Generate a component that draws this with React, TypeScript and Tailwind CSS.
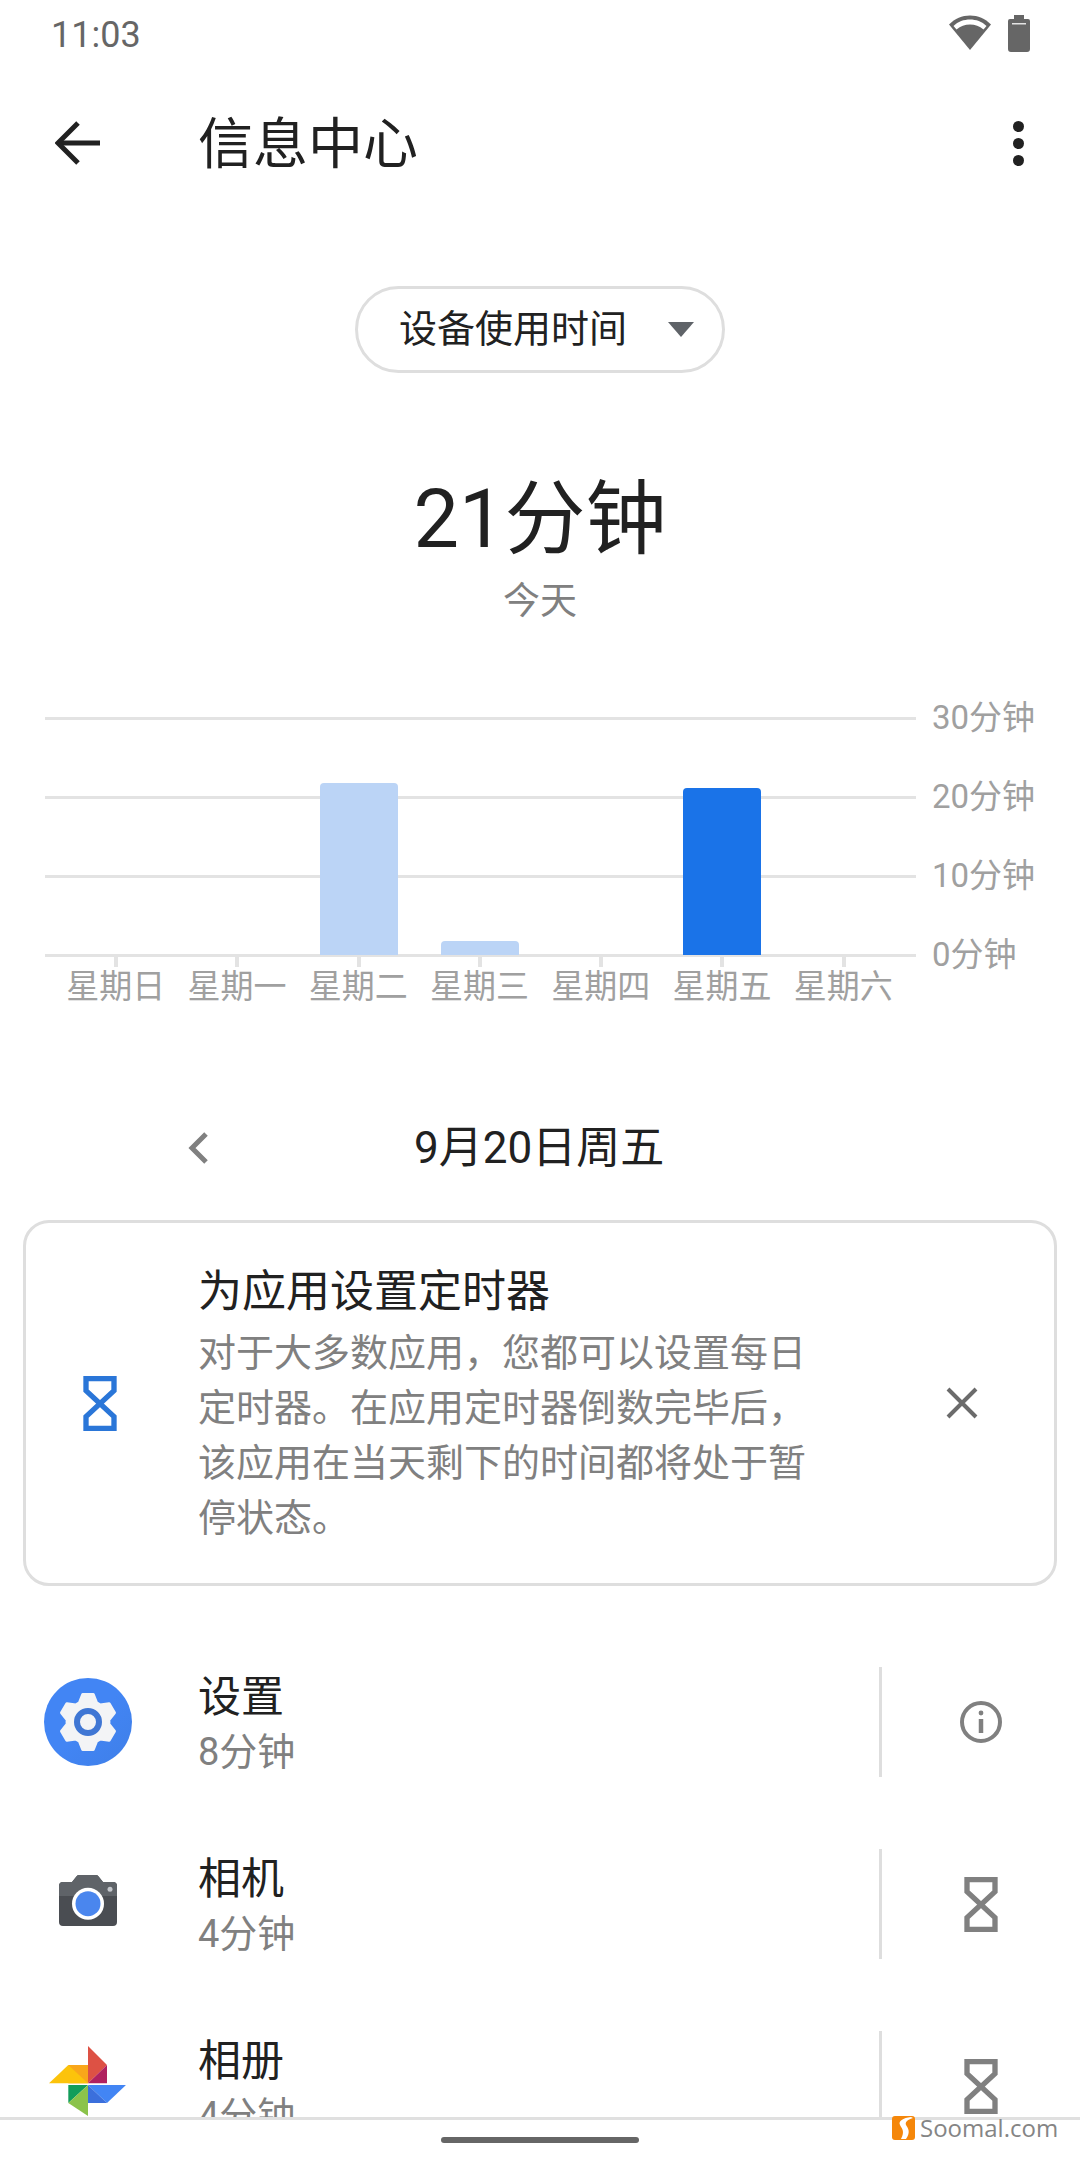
const weekdays = ['星期日', '星期一', '星期二', '星期三', '星期四', '星期五', '星期六'];
const axisLabels = ['30分钟', '20分钟', '10分钟', '0分钟'];
const tickXs = [71, 192, 314, 435, 556, 677, 799];

// six-tooth gear outline, centre 0,0
const gearPoints = Array.from({ length: 6 }, (_, i) => {
  const a = (i * Math.PI) / 3 - Math.PI / 2;
  const pt = (r: number, d: number) =>
    `${(r * Math.cos(a + d)).toFixed(2)},${(r * Math.sin(a + d)).toFixed(2)}`;
  return [pt(21, -0.42), pt(28, -0.19), pt(28, 0.19), pt(21, 0.42)].join(' ');
}).join(' ');

const Hourglass = ({ color }: { color: string }) => (
  <svg width="34" height="55" viewBox="0 0 100 165" fill="none" stroke={color} strokeWidth="16" strokeLinejoin="miter">
    <path d="M8 8H92V44L8 122V157H92V122L8 44Z" />
  </svg>
);

const SettingsIcon = () => (
  <svg width="88" height="88" viewBox="-44 -44 88 88">
    <defs>
      <linearGradient id="gearBg" x1="0" y1="0" x2="1" y2="1">
        <stop offset="0.5" stopColor="#4285f4" />
        <stop offset="1" stopColor="#3f7fe8" />
      </linearGradient>
    </defs>
    <circle r="44" fill="url(#gearBg)" />
    <polygon points={gearPoints} fill="#f3f4f6" stroke="#f3f4f6" strokeWidth="3" strokeLinejoin="round" />
    <circle r="11" fill="#f3f4f6" stroke="#3f76d4" strokeWidth="6" />
  </svg>
);

const CameraIcon = () => (
  <svg width="58" height="51" viewBox="0 0 58 51" className="mb-[7px]">
    <path d="M20 0H37Q39 0 40 2L44 7H54Q58 7 58 11V47Q58 51 54 51H4Q0 51 0 47V11Q0 7 4 7H13L17 2Q18 0 20 0Z" fill="#4a4d52" />
    <path d="M20 0H37Q39 0 40 2L44 7H54Q58 7 58 11V21H0V11Q0 7 4 7H13L17 2Q18 0 20 0Z" fill="#5f6368" />
    <circle cx="29" cy="28.7" r="16" fill="#ffffff" />
    <circle cx="29" cy="28.7" r="12.5" fill="#4a86ee" />
    <circle cx="51" cy="14.3" r="2.5" fill="#c4c7cc" />
  </svg>
);

const PhotosIcon = () => (
  <svg width="78" height="76" viewBox="32 25 226 220" className="mb-[4px]">
    <polygon points="145,25 200,80 145,133" fill="#dd5144" />
    <polygon points="200,80 200,133 145,133" fill="#b0215f" />
    <polygon points="145,138 255,138 200,190" fill="#4285f4" />
    <polygon points="145,138 200,190 145,190" fill="#3b6fdc" />
    <polygon points="145,138 88,138 88,190" fill="#129d5a" />
    <polygon points="145,138 88,190 145,228" fill="#8bc34a" />
    <polygon points="88,80 145,80 145,133 88,133" fill="#f9a61a" />
    <polygon points="32,133 88,80 145,133" fill="#fcc30b" />
  </svg>
);

const AppRow = ({ name, time, icon, action }: { name: string; time: string; icon: React.ReactNode; action: React.ReactNode }) => (
  <div className="flex items-center h-[182px] shrink-0">
    <div className="w-[176px] flex justify-center shrink-0">{icon}</div>
    <div className="flex-1 ml-[22px] pt-[5px]">
      <div className="text-[43px] leading-[55px] text-[#212121]">{name}</div>
      <div className="text-[38px] leading-[55px] text-[#808080]">{time}</div>
    </div>
    <div className="w-[3px] h-[110px] bg-[#dedede]" />
    <div className="w-[198px] flex justify-center shrink-0">{action}</div>
  </div>
);

export default function App() {
  return (
    <div lang="zh-CN" className="relative w-[1080px] h-[2160px] bg-white overflow-hidden font-['Roboto','Noto_Sans_CJK_SC',sans-serif]">
      <div className="h-[2117px] overflow-hidden flex flex-col">
        {/* Status bar */}
        <div className="h-[66px] shrink-0 flex items-center justify-between pl-[51px] pr-[50px]">
          <span className="text-[36px] pt-[3px] text-[#666666]">11:03</span>
          <div className="flex items-center gap-[17px]">
            <svg width="42" height="36" viewBox="0 0 42 36">
              <path d="M0 9.5C6 3.5 13 0.5 21 0.5C29 0.5 36 3.5 42 9.5L21 35Z" fill="#666666" />
              <path d="M4.5 11C9 6.5 15 4.5 21 4.5C27 4.5 33 6.5 37.5 11L34.5 14.5C30.5 11 26 9.5 21 9.5C16 9.5 11.5 11 7.5 14.5Z" fill="#ffffff" />
            </svg>
            <svg width="22" height="37" viewBox="0 0 22 37">
              <path d="M6 0H16V4H20Q22 4 22 6V34Q22 37 19 37H3Q0 37 0 34V6Q0 4 2 4H6Z" fill="#666666" />
              <rect x="4" y="8" width="14" height="1.5" fill="#e4e4e4" />
            </svg>
          </div>
        </div>

        {/* Toolbar */}
        <div className="h-[154px] shrink-0 flex items-center pl-[55px] pr-[56px]">
          <svg width="45" height="44" viewBox="0 0 45 44" fill="none" stroke="#212121" strokeWidth="5">
            <path d="M45 22H4" />
            <path d="M23 2L3 22L23 42" />
          </svg>
          <h1 className="ml-[98px] pt-[2px] flex-1 text-[55px] leading-[70px] text-[#212121]">信息中心</h1>
          <div className="flex flex-col gap-[6px]">
            <span className="w-[11px] h-[11px] rounded-full bg-[#212121]" />
            <span className="w-[11px] h-[11px] rounded-full bg-[#212121]" />
            <span className="w-[11px] h-[11px] rounded-full bg-[#212121]" />
          </div>
        </div>

        {/* Dropdown chip */}
        <div className="mt-[66px] flex justify-center shrink-0">
          <div className="w-[370px] h-[87px] rounded-full border-[3px] border-[#dedede] flex items-center pl-[41px]">
            <span className="text-[38px] text-[#212121]">设备使用时间</span>
            <svg width="26" height="15" viewBox="0 0 26 15" className="ml-[41px]">
              <polygon points="0,0 26,0 13,15" fill="#5f6368" />
            </svg>
          </div>
        </div>

        {/* Total */}
        <div className="mt-[97px] text-center text-[81px] leading-[100px] text-[#212121] shrink-0">21分钟</div>
        <div className="mt-[7px] text-center text-[37px] leading-[50px] text-[#808080] shrink-0">今天</div>

        {/* Chart */}
        <div className="mt-[51px] flex pl-[45px] shrink-0">
          <div className="w-[871px]">
            <svg width="871" height="289" viewBox="0 0 871 289" className="block">
              {[40, 119, 198, 277].map((y) => (
                <rect key={y} x="0" y={y - 1} width="871" height="3" fill="#e3e3e3" />
              ))}
              {tickXs.map((x) => (
                <rect key={x} x={x - 2} y="277" width="4" height="12" fill="#e3e3e3" />
              ))}
              <path d="M275 277V109Q275 105 279 105H349Q353 105 353 109V277Z" fill="#bbd4f6" />
              <path d="M396 277V267Q396 263 400 263H470Q474 263 474 267V277Z" fill="#bbd4f6" />
              <path d="M638 277V114Q638 110 642 110H712Q716 110 716 114V277Z" fill="#1a73e8" />
            </svg>
            <div className="grid grid-cols-7 w-[849px] ml-[10px]">
              {weekdays.map((d) => (
                <span key={d} className="text-center text-[33px] leading-[40px] text-[#a0a0a0]">{d}</span>
              ))}
            </div>
          </div>
          <div className="ml-[16px] flex flex-col">
            {axisLabels.map((l) => (
              <span key={l} className="text-[33px] leading-[79px] text-[#a0a0a0]">{l}</span>
            ))}
          </div>
        </div>

        {/* Date switcher */}
        <div className="mt-[111px] h-[60px] flex items-center pl-[188px] shrink-0">
          <svg width="20" height="32" viewBox="0 0 20 32" fill="none" stroke="#808080" strokeWidth="5">
            <path d="M18 2L4 16L18 30" />
          </svg>
          <span className="ml-[206px] text-[44px] text-[#212121]">9月20日周五</span>
        </div>

        {/* Timer tip card */}
        <div className="mt-[42px] mx-[23px] h-[366px] shrink-0 rounded-[26px] border-[3px] border-[#dedede] flex">
          <div className="w-[172px] pl-[57px] flex items-center shrink-0">
            <Hourglass color="#2a76d8" />
          </div>
          <div className="w-[612px] pt-[39px]">
            <div className="text-[44px] leading-[60px] text-[#212121]">为应用设置定时器</div>
            <p className="mt-[4px] text-[38px] leading-[55px] text-[#808080]">
              对于大多数应用，您都可以设置每日定时器。在应用定时器倒数完毕后，该应用在当天剩下的时间都将处于暂停状态。
            </p>
          </div>
          <div className="ml-[136px] flex items-center">
            <svg width="32" height="32" viewBox="0 0 32 32" stroke="#6b6b6b" strokeWidth="4">
              <path d="M2 2L30 30M30 2L2 30" />
            </svg>
          </div>
        </div>

        {/* App list */}
        <div className="mt-[45px] flex flex-col">
          <AppRow
            name="设置"
            time="8分钟"
            icon={<SettingsIcon />}
            action={
              <svg width="42" height="42" viewBox="0 0 42 42" fill="none" stroke="#808080" strokeWidth="4">
                <circle cx="21" cy="21" r="19" />
                <path d="M21 18V32" strokeWidth="4.5" />
                <circle cx="21" cy="12" r="2.4" fill="#808080" stroke="none" />
              </svg>
            }
          />
          <AppRow name="相机" time="4分钟" icon={<CameraIcon />} action={<Hourglass color="#808080" />} />
          <AppRow name="相册" time="4分钟" icon={<PhotosIcon />} action={<Hourglass color="#808080" />} />
        </div>
      </div>

      {/* Gesture nav bar */}
      <div className="h-[43px] border-t-[3px] border-[#e0e0e0] pt-[17px]">
        <div className="w-[198px] h-[6px] rounded-full bg-[#666666] mx-auto" />
      </div>

      {/* Watermark */}
      <div className="absolute left-[892px] top-[2116px] flex items-center gap-[5px]">
        <svg width="23" height="24" viewBox="0 0 23 24">
          <rect width="23" height="24" rx="3" fill="#f5870a" />
          <path d="M19 1C11 2 6 5 8 9C10 13 13 15 9 23H14C19 16 16 12 14 9C13 6 15 4 21 2Z" fill="#ffffff" />
        </svg>
        <span className="font-['Open_Sans',sans-serif] text-[24px] leading-[24px] text-[#858585]">Soomal.com</span>
      </div>
    </div>
  );
}
